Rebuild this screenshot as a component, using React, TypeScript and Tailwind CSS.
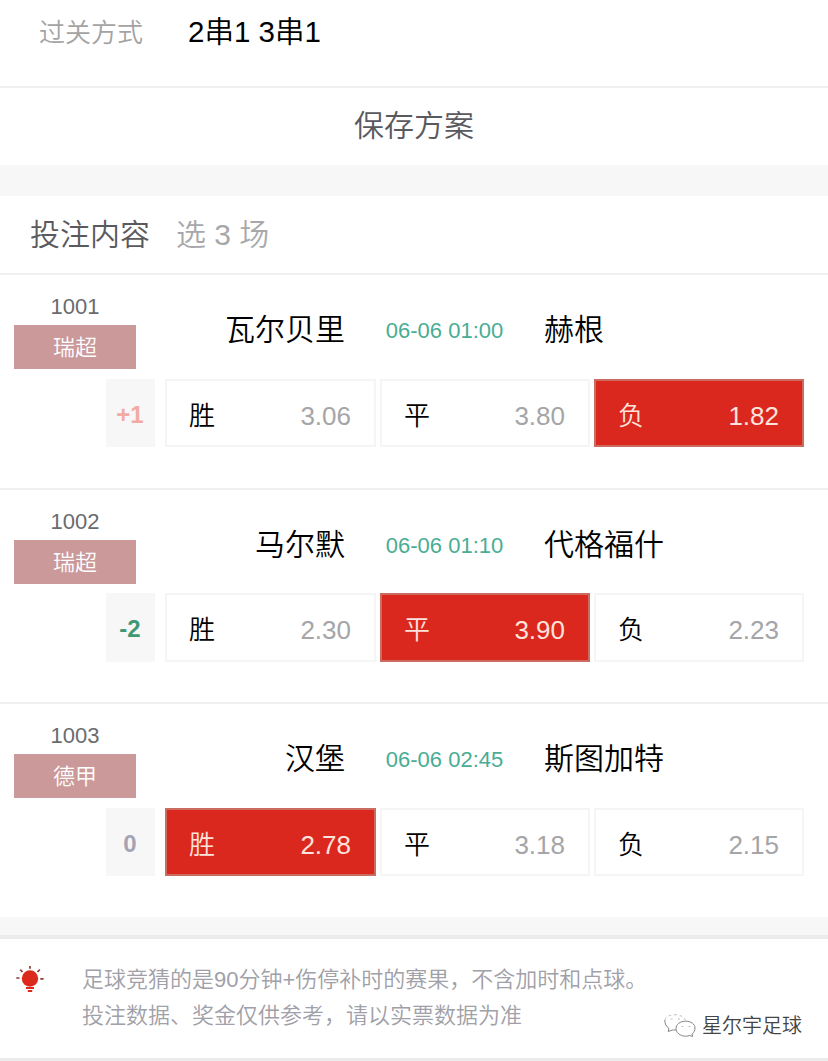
import clsx from 'clsx'

interface Outcome {
    label: string
    odds: string
}

interface Match {
    id: string
    league: string
    home: string
    away: string
    time: string
    handicap: string
    handicapClass: string
    outcomes: Outcome[]
    picked: number
}

const matches: Match[] = [
    {
        id: '1001',
        league: '瑞超',
        home: '瓦尔贝里',
        away: '赫根',
        time: '06-06 01:00',
        handicap: '+1',
        handicapClass: 'text-[#f3aaa5]',
        outcomes: [
            { label: '胜', odds: '3.06' },
            { label: '平', odds: '3.80' },
            { label: '负', odds: '1.82' },
        ],
        picked: 2,
    },
    {
        id: '1002',
        league: '瑞超',
        home: '马尔默',
        away: '代格福什',
        time: '06-06 01:10',
        handicap: '-2',
        handicapClass: 'text-[#3f9873]',
        outcomes: [
            { label: '胜', odds: '2.30' },
            { label: '平', odds: '3.90' },
            { label: '负', odds: '2.23' },
        ],
        picked: 1,
    },
    {
        id: '1003',
        league: '德甲',
        home: '汉堡',
        away: '斯图加特',
        time: '06-06 02:45',
        handicap: '0',
        handicapClass: 'text-[#a5a3b3]',
        outcomes: [
            { label: '胜', odds: '2.78' },
            { label: '平', odds: '3.18' },
            { label: '负', odds: '2.15' },
        ],
        picked: 0,
    },
]

function BulbIcon() {
    return (
        <svg className="w-7 h-7" viewBox="0 0 28 28" fill="none">
            <circle cx="14" cy="12.5" r="8.2" fill="#dc291e" />
            <path d="M14 0v2.8M4.2 3.6l2.3 2.4M23.8 3.6l-2.3 2.4M.3 12h3.2M24.3 12.8h3.3" stroke="#8f3a36" strokeWidth={1.7} />
            <path d="M10 22h8M11.8 25h4.4" stroke="#dc291e" strokeWidth={1.8} />
        </svg>
    )
}

function WechatIcon() {
    return (
        <svg className="w-8 h-6" viewBox="0 0 32 24" fill="none" stroke="#777" strokeWidth={0.9}>
            <path d="M1 6C1.5 2.5 6 .8 11 .8c5.5 0 9 2 10.500 5.500" stroke="#bbb" strokeDasharray="3 2.5" />
            <path d="M.8 6c0 4 1.500 6.500 4 8.200L4.300 17.500l4-1.500h3.500" />
            <path d="M31 14c0-4-4-6.800-9.500-6.800S12 10.500 12 14.500s4 7.700 9.500 7.700c1.600 0 3-.2 4.200-.7l3 1-.6-2.400C30 18.300 31 16.500 31 14z" />
            <path d="M6.500 5h2M14 5h2M17.500 12.500h2M24.500 12.500h2" stroke="#bbb" />
        </svg>
    )
}

function MatchRow({ match }: { match: Match }) {
    return (
        <div className="h-[214.5px] border-b-2 border-[#efefef] last:border-b-0">
            <div className="h-[103.9px] flex">
                <div className="ml-3.5 w-[122px] text-center text-[22px]">
                    <div className="h-[50px] pt-[15px] leading-[34px] text-[#6b6b6e]">{match.id}</div>
                    <div className="h-11 leading-[46px] bg-[#cb9999] text-white">{match.league}</div>
                </div>
                <div className="w-[209px] pt-8 text-right text-[30px] leading-[46px] text-black">{match.home}</div>
                <div className="w-[199px] pt-8 text-center text-[22px] leading-[47px] text-[#48ad94]">{match.time}</div>
                <div className="pt-8 text-[30px] leading-[46px] text-black">{match.away}</div>
            </div>
            <div className="flex h-[68.2px] ml-[106px]">
                <div
                    className={clsx(
                        'w-[49px] mr-2.5 pr-px bg-[#f7f7f7] text-center text-[24px] leading-[71px] font-bold',
                        match.handicapClass
                    )}
                >
                    {match.handicap}
                </div>
                <div className="grid grid-cols-[211px_210px_210px] gap-1">
                    {match.outcomes.map((outcome, i) => (
                        <div
                            key={outcome.label}
                            className={clsx(
                                'flex items-center justify-between border-2 pl-[22px] pr-[23px] pt-1.5 text-[26px] leading-none',
                                i === match.picked
                                    ? 'bg-[#db281e] border-[#cc6b60] text-[#fce3dc]'
                                    : 'bg-white border-[#f5f5f5] text-black'
                            )}
                        >
                            <span>{outcome.label}</span>
                            <span className={clsx(i !== match.picked && 'text-[#a5a5a7]')}>{outcome.odds}</span>
                        </div>
                    ))}
                </div>
            </div>
        </div>
    )
}

export default function App() {
    return (
        <div className="w-[828px] h-[1061px] overflow-hidden bg-white font-['Liberation_Sans','Noto_Sans_CJK_SC',sans-serif] font-[350]">
            {/* Pass type */}
            <div className="h-[88px] pl-[39px] flex border-b-2 border-[#efefef]">
                <span className="w-[149px] text-[26px] leading-[66px] text-[#a3a3a3]">过关方式</span>
                <span className="text-[29.5px] leading-[64px] text-black">2串1 3串1</span>
            </div>
            <div className="h-[77px] text-center text-[30px] leading-[76px] text-[#5a5a5e]">保存方案</div>
            <div className="h-[31px] bg-[#f7f7f7]" />

            {/* Bet content */}
            <div className="h-[79px] pl-[30px] flex gap-[26px] border-b-2 border-[#efefef] text-[30px] leading-[78px]">
                <span className="text-[#5a5a5e]">投注内容</span>
                <span className="text-[#a8a8aa]">选 3 场</span>
            </div>
            <div className="h-[642px]">
                {matches.map((match) => (
                    <MatchRow key={match.id} match={match} />
                ))}
            </div>

            {/* Tips */}
            <div className="h-[22px] bg-[#f7f7f7] border-b-4 border-[#ebebeb]" />
            <div className="relative h-[119px] flex">
                <div className="ml-4 mt-[27px] w-[66px]">
                    <BulbIcon />
                </div>
                <div className="pt-[23px] text-[22px] leading-[36px] text-[#a0a0a8]">
                    <p>足球竞猜的是90分钟+伤停补时的赛果，不含加时和点球。</p>
                    <p>投注数据、奖金仅供参考，请以实票数据为准</p>
                </div>
                <div className="absolute left-[664px] top-[74px] flex items-center gap-1.5">
                    <WechatIcon />
                    <span className="text-[20px] leading-[26px] text-[#454545]">星尔宇足球</span>
                </div>
            </div>
            <div className="h-[3px] bg-[#ebebeb]" />
        </div>
    )
}
